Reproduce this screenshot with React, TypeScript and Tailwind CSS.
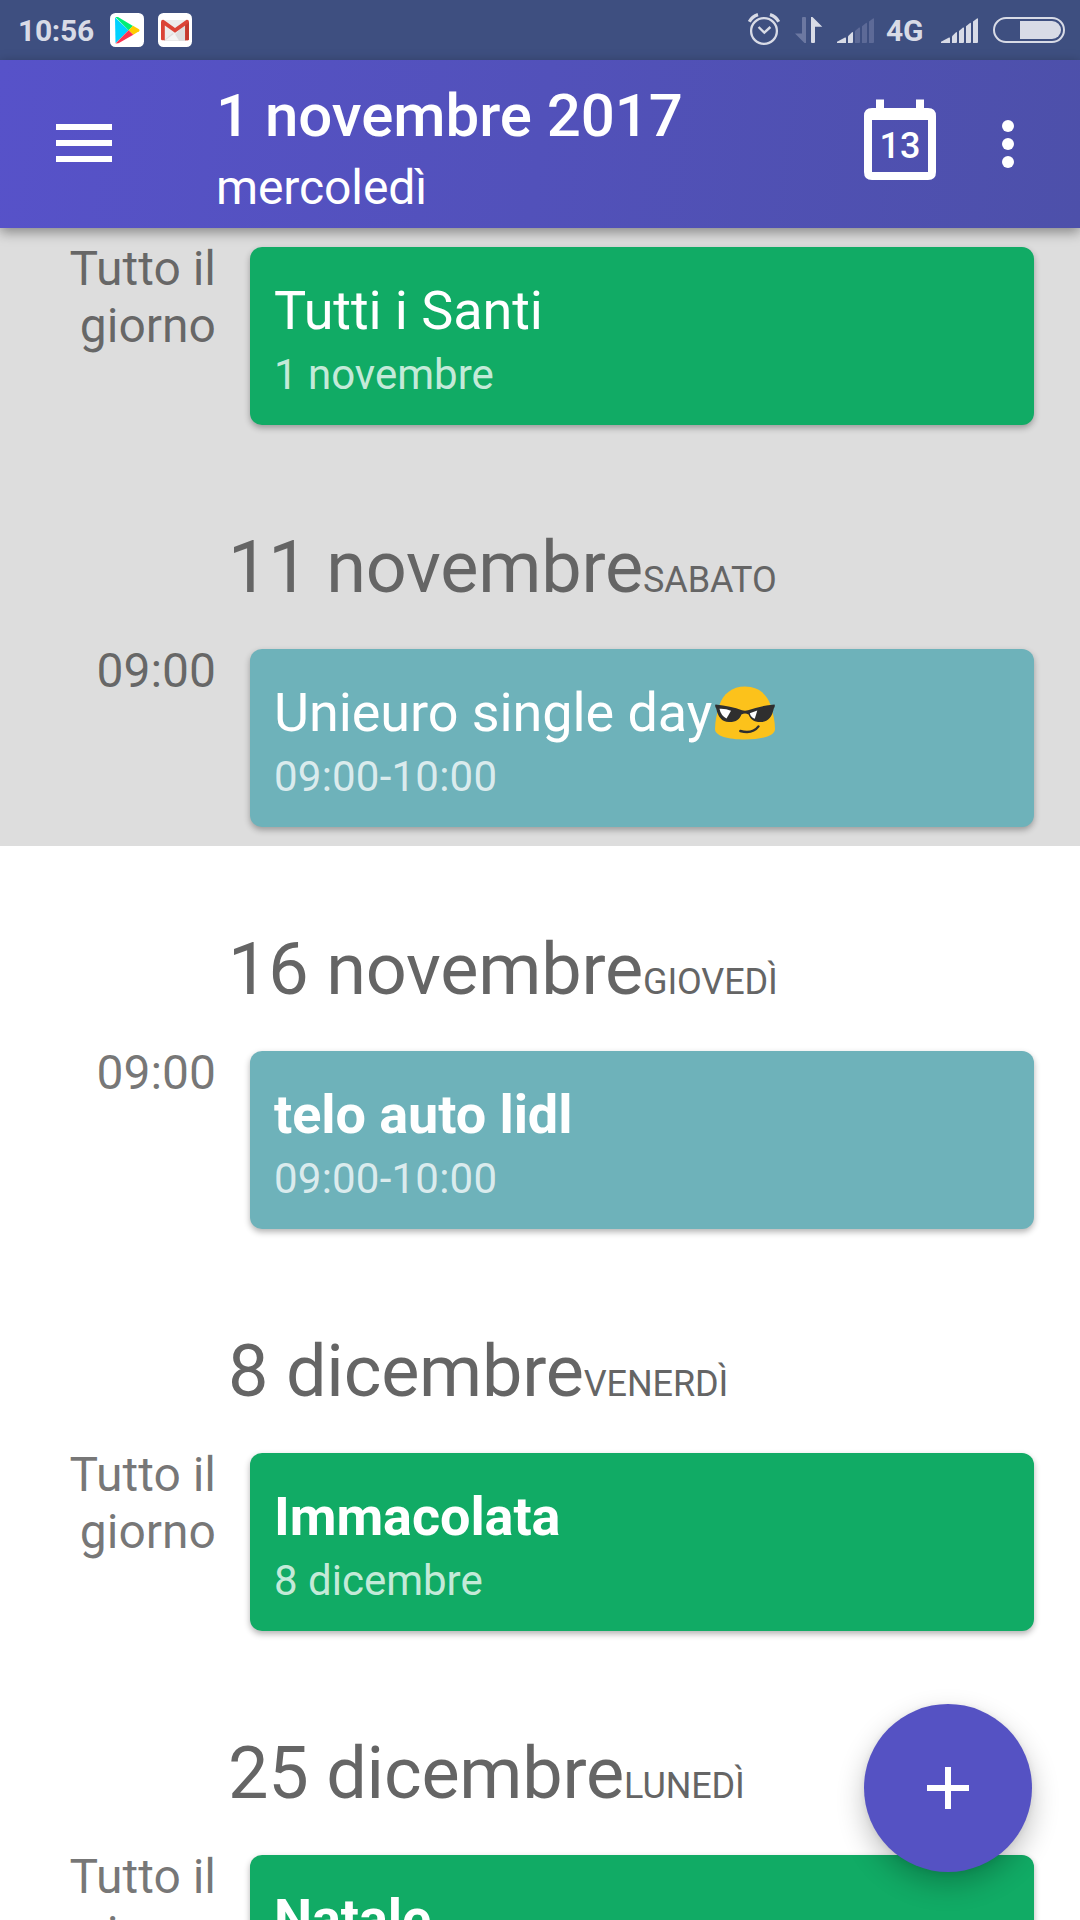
import clsx from "clsx";

interface AgendaEvent {
  id: number;
  date?: string;
  weekday?: string;
  time: string;
  title: string;
  subtitle: string;
  cool?: boolean;
  unread: boolean;
  holiday: boolean;
}

const pastEvents: AgendaEvent[] = [
  { id: 1, time: "Tutto il giorno", title: "Tutti i Santi", subtitle: "1 novembre", unread: false, holiday: true },
  { id: 2, date: "11 novembre", weekday: "SABATO", time: "09:00", title: "Unieuro single day", subtitle: "09:00-10:00", cool: true, unread: false, holiday: false },
];

const nextEvents: AgendaEvent[] = [
  { id: 3, date: "16 novembre", weekday: "GIOVEDÌ", time: "09:00", title: "telo auto lidl", subtitle: "09:00-10:00", unread: true, holiday: false },
  { id: 4, date: "8 dicembre", weekday: "VENERDÌ", time: "Tutto il giorno", title: "Immacolata", subtitle: "8 dicembre", unread: true, holiday: true },
  { id: 5, date: "25 dicembre", weekday: "LUNEDÌ", time: "Tutto il giorno", title: "Natale", subtitle: "25 dicembre", unread: true, holiday: true },
];

function PlayStoreIcon() {
  return (
    <svg className="h-[34px] w-[34px]" viewBox="0 0 34 34">
      <rect width="34" height="34" rx="5.5" fill="#fff" />
      <path d="M5 4.5 L18.6 17.3 L5.5 30.3 Z" fill="#00d2ff" />
      <path d="M5.3 4 L8 4 L23 13 L18.6 17.3 Z" fill="#00ef76" />
      <path d="M23 12.8 L29 16.2 Q30.3 17.3 29 18.3 L23.3 21.7 L18.6 17.3 Z" fill="#ffcc00" />
      <path d="M18.6 17.3 L23.3 21.7 L8.5 30.2 L5.5 30.6 Z" fill="#fb3250" />
    </svg>
  );
}

function GmailIcon() {
  return (
    <svg className="h-[34px] w-[34px]" viewBox="0 0 34 34">
      <rect width="34" height="34" rx="5.5" fill="#fff" />
      <path d="M6 7 H28 V28 H6 Z" fill="#ececec" />
      <path d="M6 27.5 L14.5 20 L17 22 L28 9 V28 H6 Z" fill="#dedede" />
      <path d="M7 27.5 L16.5 20.5 L21 27.5 Z" fill="#f4f4f4" />
      <path d="M3 9 Q3 6.6 5.3 6.8 L6.5 7.4 L17 15 L27.5 7.4 L28.7 6.8 Q31 6.6 31 9 V26 Q31 27.3 29.7 27.3 H27.2 V12.5 L17 19.8 L6.8 12.5 V27.3 H4.3 Q3 27.3 3 26 Z" fill="#db4437" />
      <path d="M27.2 12.5 L31 9.5 V26 Q31 27.3 29.7 27.3 H27.2 Z" fill="#c53a2e" />
    </svg>
  );
}

function AlarmIcon() {
  return (
    <svg className="h-[34px] w-[34px]" viewBox="27 12 34 34" fill="none" stroke="#d8dbe6">
      <circle cx="44" cy="31" r="12.9" strokeWidth="2.3" />
      <path d="M38.6 27 L44.3 32.7 L50.4 27" strokeWidth="2.4" />
      <path d="M29.3 21.8 Q32 16.5 38 14.6" strokeWidth="3.2" />
      <path d="M58.7 21.8 Q56 16.5 50 14.6" strokeWidth="3.2" />
    </svg>
  );
}

function DataArrowsIcon() {
  return (
    <svg className="h-[26px] w-[28px]" viewBox="75 17 28 26">
      <path d="M82 18 Q82 17 83 17 H85 Q86 17 86 18 V43 H84.5 L75 33.6 H82 Z" fill="#6c78a1" />
      <path d="M91 17 H92.5 L102.3 26.8 H95 V42 Q95 43 94 43 H92 Q91 43 91 42 Z" fill="#d8dbe6" />
    </svg>
  );
}

function SignalIcon({ level }: { level: number }) {
  const bars = [
    "M0 25 V23.8 L8 19.6 Q9 19.2 9 20.2 V25 Z",
    "M11 25 V18.2 L15 14.2 Q16 13.6 16 14.6 V24 Q16 25 15 25 Z",
    "M18 25 V13 L22 9.6 Q23 9 23 10 V24 Q23 25 22 25 Z",
    "M25 25 V8.2 L29 5 Q30 4.4 30 5.4 V24 Q30 25 29 25 Z",
    "M32 25 V3.4 L36 .4 Q37 0 37 1 V24 Q37 25 36 25 Z",
  ];
  return (
    <svg className="h-[25px] w-[37px]" viewBox="0 0 37 25">
      {bars.map((d, index) => (
        <path key={index} d={d} fill={index < level ? "#d8dbe6" : "#5d6a97"} />
      ))}
    </svg>
  );
}

function BatteryIcon() {
  return (
    <svg className="h-[26px] w-[72px]" viewBox="0 0 72 26">
      <rect x="1" y="1" width="70" height="24" rx="12" fill="none" stroke="#d8dbe6" strokeWidth="2" />
      <path d="M27 4 H59 A9 9 0 0 1 59 22 H27 Z" fill="#d8dbe6" />
    </svg>
  );
}

function CoolEmoji() {
  return (
    <svg className="h-[54px] w-[62px]" viewBox="0 0 62 54">
      <path d="M31 .5 C44 .5 53 8 56.5 19 C59 27 61 35 61 43 C61 50 48 53.5 31 53.5 C14 53.5 1 50 1 43 C1 35 3 27 5.5 19 C9 8 18 .5 31 .5 Z" fill="#fcc21b" />
      <path d="M1.5 18.5 Q17 20 28 24.3 Q31 25.2 34 24.3 Q45 20 60.5 18.5 Q61.5 20 59.8 22.5 C58 31 54 36.3 46.5 36 C39.5 36 36.5 33 34.6 28.4 Q31 26.8 27.4 28.4 C25.5 33 22.5 36 15.5 36 C8 36.3 4 31 2.2 22.5 Q.5 20 1.5 18.5 Z" fill="#2f2f2f" />
      <path d="M5.5 22.8 Q12 22.5 17 24.7 L12.5 32.5 Q6.7 29.5 5.5 22.8 Z" fill="#fff" />
      <path d="M35.8 27.2 L43.3 24.6 L40.8 32.8 Q36.8 31.3 35.8 27.2 Z" fill="#fff" />
      <path d="M26.3 45 Q38.5 48.4 44.5 40.4" fill="none" stroke="#2f2f2f" strokeWidth="2.4" strokeLinecap="round" />
    </svg>
  );
}

function StatusBar() {
  return (
    <div className="flex h-[60px] items-center bg-[#3e4f80] pl-[18px] text-[30px] leading-none font-bold text-[#d8dbe6]">
      <span className="mt-[1px] w-[92px] tracking-[-0.3px]">10:56</span>
      <PlayStoreIcon />
      <div className="ml-[14px]">
        <GmailIcon />
      </div>
      <div className="ml-auto flex items-center pr-[15px]">
        <div className="-mt-[2px]">
          <AlarmIcon />
        </div>
        <div className="ml-[14px]">
          <DataArrowsIcon />
        </div>
        <div className="ml-[14px]">
          <SignalIcon level={2} />
        </div>
        <span className="mt-[1px] ml-[12px] w-[55px] tracking-[-0.3px]">4G</span>
        <SignalIcon level={5} />
        <div className="ml-[15px]">
          <BatteryIcon />
        </div>
      </div>
    </div>
  );
}

function Header() {
  return (
    <header className="relative z-10 flex h-[168px] bg-linear-[98deg] from-[#5752c9] via-[#5251ba] to-[#4d50aa] text-white shadow-[0_4px_12px_rgba(0,0,0,0.4)]">
      <button className="mt-[64px] ml-[56px] flex h-[38px] w-[56px] flex-col justify-between">
        <span className="h-[6px] w-full bg-white" />
        <span className="h-[6px] w-full bg-white" />
        <span className="h-[6px] w-full bg-white" />
      </button>
      <div className="ml-[104px] flex-1 pt-[21px]">
        <h1 className="text-[60px] leading-[70px] font-medium tracking-[-0.05px]">1 novembre 2017</h1>
        <p className="mt-[9px] text-[48px] leading-[56px] tracking-[-0.1px]">mercoledì</p>
      </div>
      <button className="mt-[39px] h-[82px] w-[74px]">
        <svg className="h-[82px] w-[74px]" viewBox="0 0 74 82">
          <path
            d="M13 .5 H21 V9 H53 V.5 H61 V9 H65 Q73 9 73 17 V73 Q73 81 65 81 H9 Q1 81 1 73 V17 Q1 9 9 9 H13 Z M9 21 V73 H65 V21 Z"
            fill="#fff"
            fillRule="evenodd"
          />
          <text x="37" y="58.7" textAnchor="middle" fontSize="36" fontWeight="500" fill="#fff">13</text>
        </svg>
      </button>
      <button className="mt-[60px] mr-[66px] ml-[65px] flex h-[48px] w-[12px] flex-col justify-between">
        <span className="h-[12px] w-[12px] rounded-full bg-white" />
        <span className="h-[12px] w-[12px] rounded-full bg-white" />
        <span className="h-[12px] w-[12px] rounded-full bg-white" />
      </button>
    </header>
  );
}

function EventRow({ event }: { event: AgendaEvent }) {
  return (
    <section className="pb-[19px]">
      {event.date && (
        <h2 className="mb-[39px] ml-[228px] pt-[82px] text-[72px] leading-[84px] tracking-[-0.2px] whitespace-nowrap text-[#656565]">
          {event.date}
          <span className="text-[36px] leading-none tracking-[-0.1px]">{event.weekday}</span>
        </h2>
      )}
      <div className={clsx("flex", !event.date && "pt-[19px]")}>
        <div className="-mt-[7px] h-[114px] w-[216px] pl-[60px] text-right text-[48px] leading-[57px] text-black/54">
          {event.time}
        </div>
        <div
          className={clsx(
            "ml-[34px] h-[178px] w-[784px] rounded-[12px] px-[24px] pt-[32px] text-white shadow-[0_3px_6px_rgba(0,0,0,0.3)]",
            event.holiday ? "bg-[#11ab65]" : "bg-[#6eb2ba]"
          )}
        >
          <div
            className={clsx(
              "flex h-[64px] items-center text-[54px] leading-[64px] tracking-[-0.08px]",
              event.unread && "font-bold"
            )}
          >
            {event.title}
            {event.cool && (
              <div className="-mt-[1px] ml-[2px]">
                <CoolEmoji />
              </div>
            )}
          </div>
          <div className={clsx("mt-[8px] text-[42px] leading-[48px] text-white/77", !event.holiday && "tracking-[0.22px]")}>
            {event.subtitle}
          </div>
        </div>
      </div>
    </section>
  );
}

export default function App() {
  return (
    <div className="relative h-[1920px] w-[1080px] overflow-hidden bg-white font-[Roboto,sans-serif]">
      <StatusBar />
      <Header />
      <div className="bg-[#dddddd]">
        {pastEvents.map((event) => (
          <EventRow key={event.id} event={event} />
        ))}
      </div>
      <div>
        {nextEvents.map((event) => (
          <EventRow key={event.id} event={event} />
        ))}
      </div>
      <button className="absolute right-[48px] bottom-[48px] flex h-[168px] w-[168px] items-center justify-center rounded-full bg-[#5552c3] shadow-[0_12px_28px_rgba(0,0,0,0.24),0_1px_6px_rgba(0,0,0,0.08)]">
        <svg className="h-[42px] w-[42px]" viewBox="0 0 42 42">
          <path d="M18 0 H24 V18 H42 V24 H24 V42 H18 V24 H0 V18 H18 Z" fill="#fff" />
        </svg>
      </button>
    </div>
  );
}
